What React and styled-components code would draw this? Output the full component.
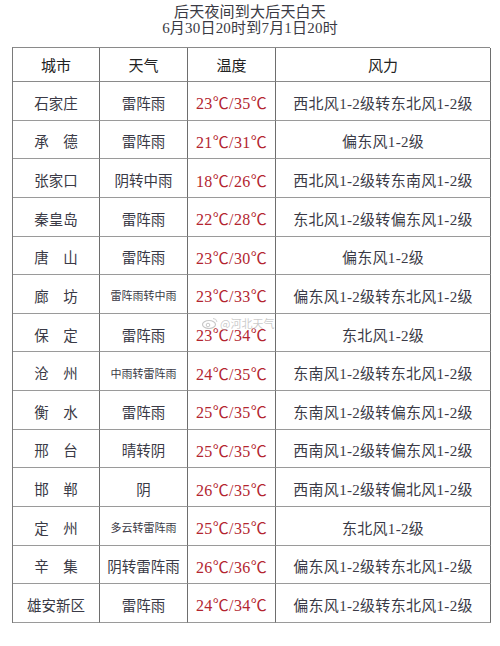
import React from 'react';
import styled, { createGlobalStyle } from 'styled-components';

const GlobalStyle = createGlobalStyle`
  html, body {
    margin: 0;
    padding: 0;
    background: #ffffff;
  }
  body {
    font-family: "Liberation Serif", "Noto Sans CJK SC", serif;
    color: #3a3a44;
  }
`;

const rows = [
  { city: '石家庄', weather: '雷阵雨', temp: '23℃/35℃', wind: '西北风1-2级转东北风1-2级' },
  { city: '承　德', weather: '雷阵雨', temp: '21℃/31℃', wind: '偏东风1-2级' },
  { city: '张家口', weather: '阴转中雨', temp: '18℃/26℃', wind: '西北风1-2级转东南风1-2级' },
  { city: '秦皇岛', weather: '雷阵雨', temp: '22℃/28℃', wind: '东北风1-2级转偏东风1-2级' },
  { city: '唐　山', weather: '雷阵雨', temp: '23℃/30℃', wind: '偏东风1-2级' },
  { city: '廊　坊', weather: '雷阵雨转中雨', small: true, temp: '23℃/33℃', wind: '偏东风1-2级转东北风1-2级' },
  { city: '保　定', weather: '雷阵雨', temp: '23℃/34℃', wind: '东北风1-2级' },
  { city: '沧　州', weather: '中雨转雷阵雨', small: true, temp: '24℃/35℃', wind: '东南风1-2级转东北风1-2级' },
  { city: '衡　水', weather: '雷阵雨', temp: '25℃/35℃', wind: '东南风1-2级转偏东风1-2级' },
  { city: '邢　台', weather: '晴转阴', temp: '25℃/35℃', wind: '西南风1-2级转偏东风1-2级' },
  { city: '邯　郸', weather: '阴', temp: '26℃/35℃', wind: '西南风1-2级转偏北风1-2级' },
  { city: '定　州', weather: '多云转雷阵雨', small: true, temp: '25℃/35℃', wind: '东北风1-2级' },
  { city: '辛　集', weather: '阴转雷阵雨', temp: '26℃/36℃', wind: '偏东风1-2级转东北风1-2级' },
  { city: '雄安新区', weather: '雷阵雨', temp: '24℃/34℃', wind: '偏东风1-2级转东北风1-2级' },
];

export default function App() {
  return (
    <>
      <GlobalStyle />
      <Page>
        <Title>
          <TitleLine>后天夜间到大后天白天</TitleLine>
          <TitleLine>6月30日20时到7月1日20时</TitleLine>
        </Title>
        <TableWrap>
          <Grid>
            <HeadCell>城市</HeadCell>
            <HeadCell>天气</HeadCell>
            <HeadCell>温度</HeadCell>
            <HeadCell>风力</HeadCell>
            {rows.map((r) => (
              <React.Fragment key={r.city}>
                <Cell>{r.city}</Cell>
                <Cell small={r.small}>{r.weather}</Cell>
                <TempCell>{r.temp}</TempCell>
                <WindCell>{r.wind}</WindCell>
              </React.Fragment>
            ))}
          </Grid>
          <Watermark>
            <svg width="16" height="12" viewBox="0 0 16 12">
              <ellipse cx="7" cy="7.5" rx="6.5" ry="4" fill="none" stroke="#c8c8c8" strokeWidth="1.2" />
              <circle cx="6" cy="8" r="1.8" fill="none" stroke="#c8c8c8" strokeWidth="1" />
              <path d="M11 1.5 A4 4 0 0 1 15 5" fill="none" stroke="#d0d0d0" strokeWidth="1" />
            </svg>
            @河北天气
          </Watermark>
        </TableWrap>
      </Page>
    </>
  );
}

const Page = styled.div`
  width: 500px;
  height: 646px;
  padding-top: 4px;
  box-sizing: border-box;
`;

const Title = styled.div`
  display: flex;
  flex-direction: column;
  align-items: center;
  color: #3a3a44;
`;

const TitleLine = styled.div`
  font-size: 15px;
  line-height: 16px;
  white-space: nowrap;
  letter-spacing: 0.2px;
`;

const TableWrap = styled.div`
  position: relative;
  margin: 11px 0 0 12px;
  width: 478px;
`;

const Grid = styled.div`
  display: grid;
  grid-template-columns: 87px 88px 88px 215px;
  grid-template-rows: 34px repeat(14, 38.64px);
  border-top: 1px solid #8a8a8a;
  border-left: 1px solid #7a7a7a;
  box-sizing: border-box;
`;

const Cell = styled.div`
  display: flex;
  align-items: center;
  justify-content: center;
  padding-top: 3px;
  border-right: 1px solid #6e6e6e;
  border-bottom: 1px solid #9a9a9a;
  font-size: ${(p) => (p.small ? '11px' : '14.5px')};
  white-space: nowrap;
  color: #3a3a46;
  box-sizing: border-box;
`;

const HeadCell = styled(Cell)`
  padding-top: 0;
  font-size: 15px;
  color: #222;
  border-bottom-color: #8a8a8a;
`;

const TempCell = styled(Cell)`
  font-size: 16px;
  color: #b3252f;
  letter-spacing: 0.4px;
`;

const WindCell = styled(Cell)`
  font-size: 15px;
  letter-spacing: 0.3px;
`;

const Watermark = styled.div`
  position: absolute;
  left: 190px;
  top: 268px;
  display: flex;
  align-items: center;
  gap: 2px;
  font-family: "Noto Sans CJK SC", sans-serif;
  font-size: 11px;
  color: rgba(180, 180, 180, 0.7);
  pointer-events: none;
`;
